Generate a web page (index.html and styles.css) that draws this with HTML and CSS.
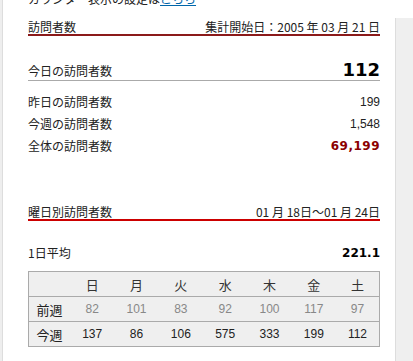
FILE: index.html
```html
<!DOCTYPE html>
<html lang="ja">
<head>
    <meta charset="UTF-8">
    <title>アクセス解析</title>
    <link rel="stylesheet" href="styles.css">
</head>
<body>
<div class="page">
    <div class="edge"></div>

    <div class="main">
        <p class="note">カウンター表示の設定は<a href="#">こちら</a></p>

        <!-- 訪問者数 -->
        <div class="sec-head">
            <span>訪問者数</span>
            <span>集計開始日：2005 年 03 月 21 日</span>
        </div>

        <div class="today">
            <span>今日の訪問者数</span>
            <span class="big">112</span>
        </div>
        <div class="row"><span>昨日の訪問者数</span><span class="num">199</span></div>
        <div class="row"><span>今週の訪問者数</span><span class="num">1,548</span></div>
        <div class="row"><span>全体の訪問者数</span><span class="num total">69,199</span></div>

        <!-- 曜日別 -->
        <div class="sec-head red">
            <span>曜日別訪問者数</span>
            <span>01 月 18日～01 月 24日</span>
        </div>

        <div class="row avg"><span>1日平均</span><span class="num strong">221.1</span></div>

        <table class="week">
            <tr class="days">
                <th></th><th>日</th><th>月</th><th>火</th><th>水</th><th>木</th><th>金</th><th>土</th>
            </tr>
            <tr class="prev">
                <th>前週</th><td>82</td><td>101</td><td>83</td><td>92</td><td>100</td><td>117</td><td>97</td>
            </tr>
            <tr class="cur">
                <th>今週</th><td>137</td><td>86</td><td>106</td><td>575</td><td>333</td><td>199</td><td>112</td>
            </tr>
        </table>
    </div>

    <div class="side"></div>
</div>
</body>
</html>
```

FILE: styles.css
```css
body { margin: 0; background: #fff; color: #222; font-family: "Noto Sans CJK JP", sans-serif; font-size: 12px; }

.page { display: flex; height: 361px; overflow: hidden; }
.edge { width: 2px; background: #eee; border-right: 1px solid #ddd; flex-shrink: 0; }
.side { flex: 1; margin-top: 18px; background: #efefef; border-left: 1px solid #ddd; }

/* Main column */
.main { width: 352px; padding: 0 15px 0 25px; flex-shrink: 0; }
.note { margin: -8px 0 0 0; line-height: 14px; }
.note a { color: #0066aa; }

.sec-head { display: flex; justify-content: space-between; line-height: 14px; margin-top: 14px; border-bottom: 2px solid #8b1a1a; }
.sec-head.red { margin-top: 48px; border-bottom-color: #c00; }

.today { display: flex; justify-content: space-between; align-items: flex-end; margin-top: 25px; height: 19px; border-bottom: 1px solid #aaa; }
.today span:first-child { line-height: 18px; }
.big { font-family: "DejaVu Sans", sans-serif; font-weight: bold; font-size: 18px; line-height: 20px; color: #000; }

.row { display: flex; justify-content: space-between; line-height: 22px; }
.today + .row { margin-top: 10px; }
.num { font-family: "Liberation Sans", sans-serif; font-size: 12px; color: #222; }
.total { font-family: "DejaVu Sans", sans-serif; color: #8b0000; font-weight: bold; letter-spacing: 0.5px; }
.strong { font-family: "DejaVu Sans", sans-serif; font-weight: bold; color: #000; }
.avg { margin-top: 21px; }

/* Weekly table */
.week { width: 352px; margin-top: 7px; border-collapse: collapse; border: 1px solid #aaa; background: #efefef; }
.week th, .week td { height: 24px; padding: 0; text-align: center; font-weight: normal; }
.week tr + tr { border-top: 1px solid #aaa; }
.week th:first-child { width: 41px; font-size: 13px; color: #222; }
.week td { font-family: "Liberation Sans", sans-serif; font-size: 12px; }
.days th { color: #333; font-size: 13px; }
.prev td { color: #888; }
.cur td { color: #222; }
```
